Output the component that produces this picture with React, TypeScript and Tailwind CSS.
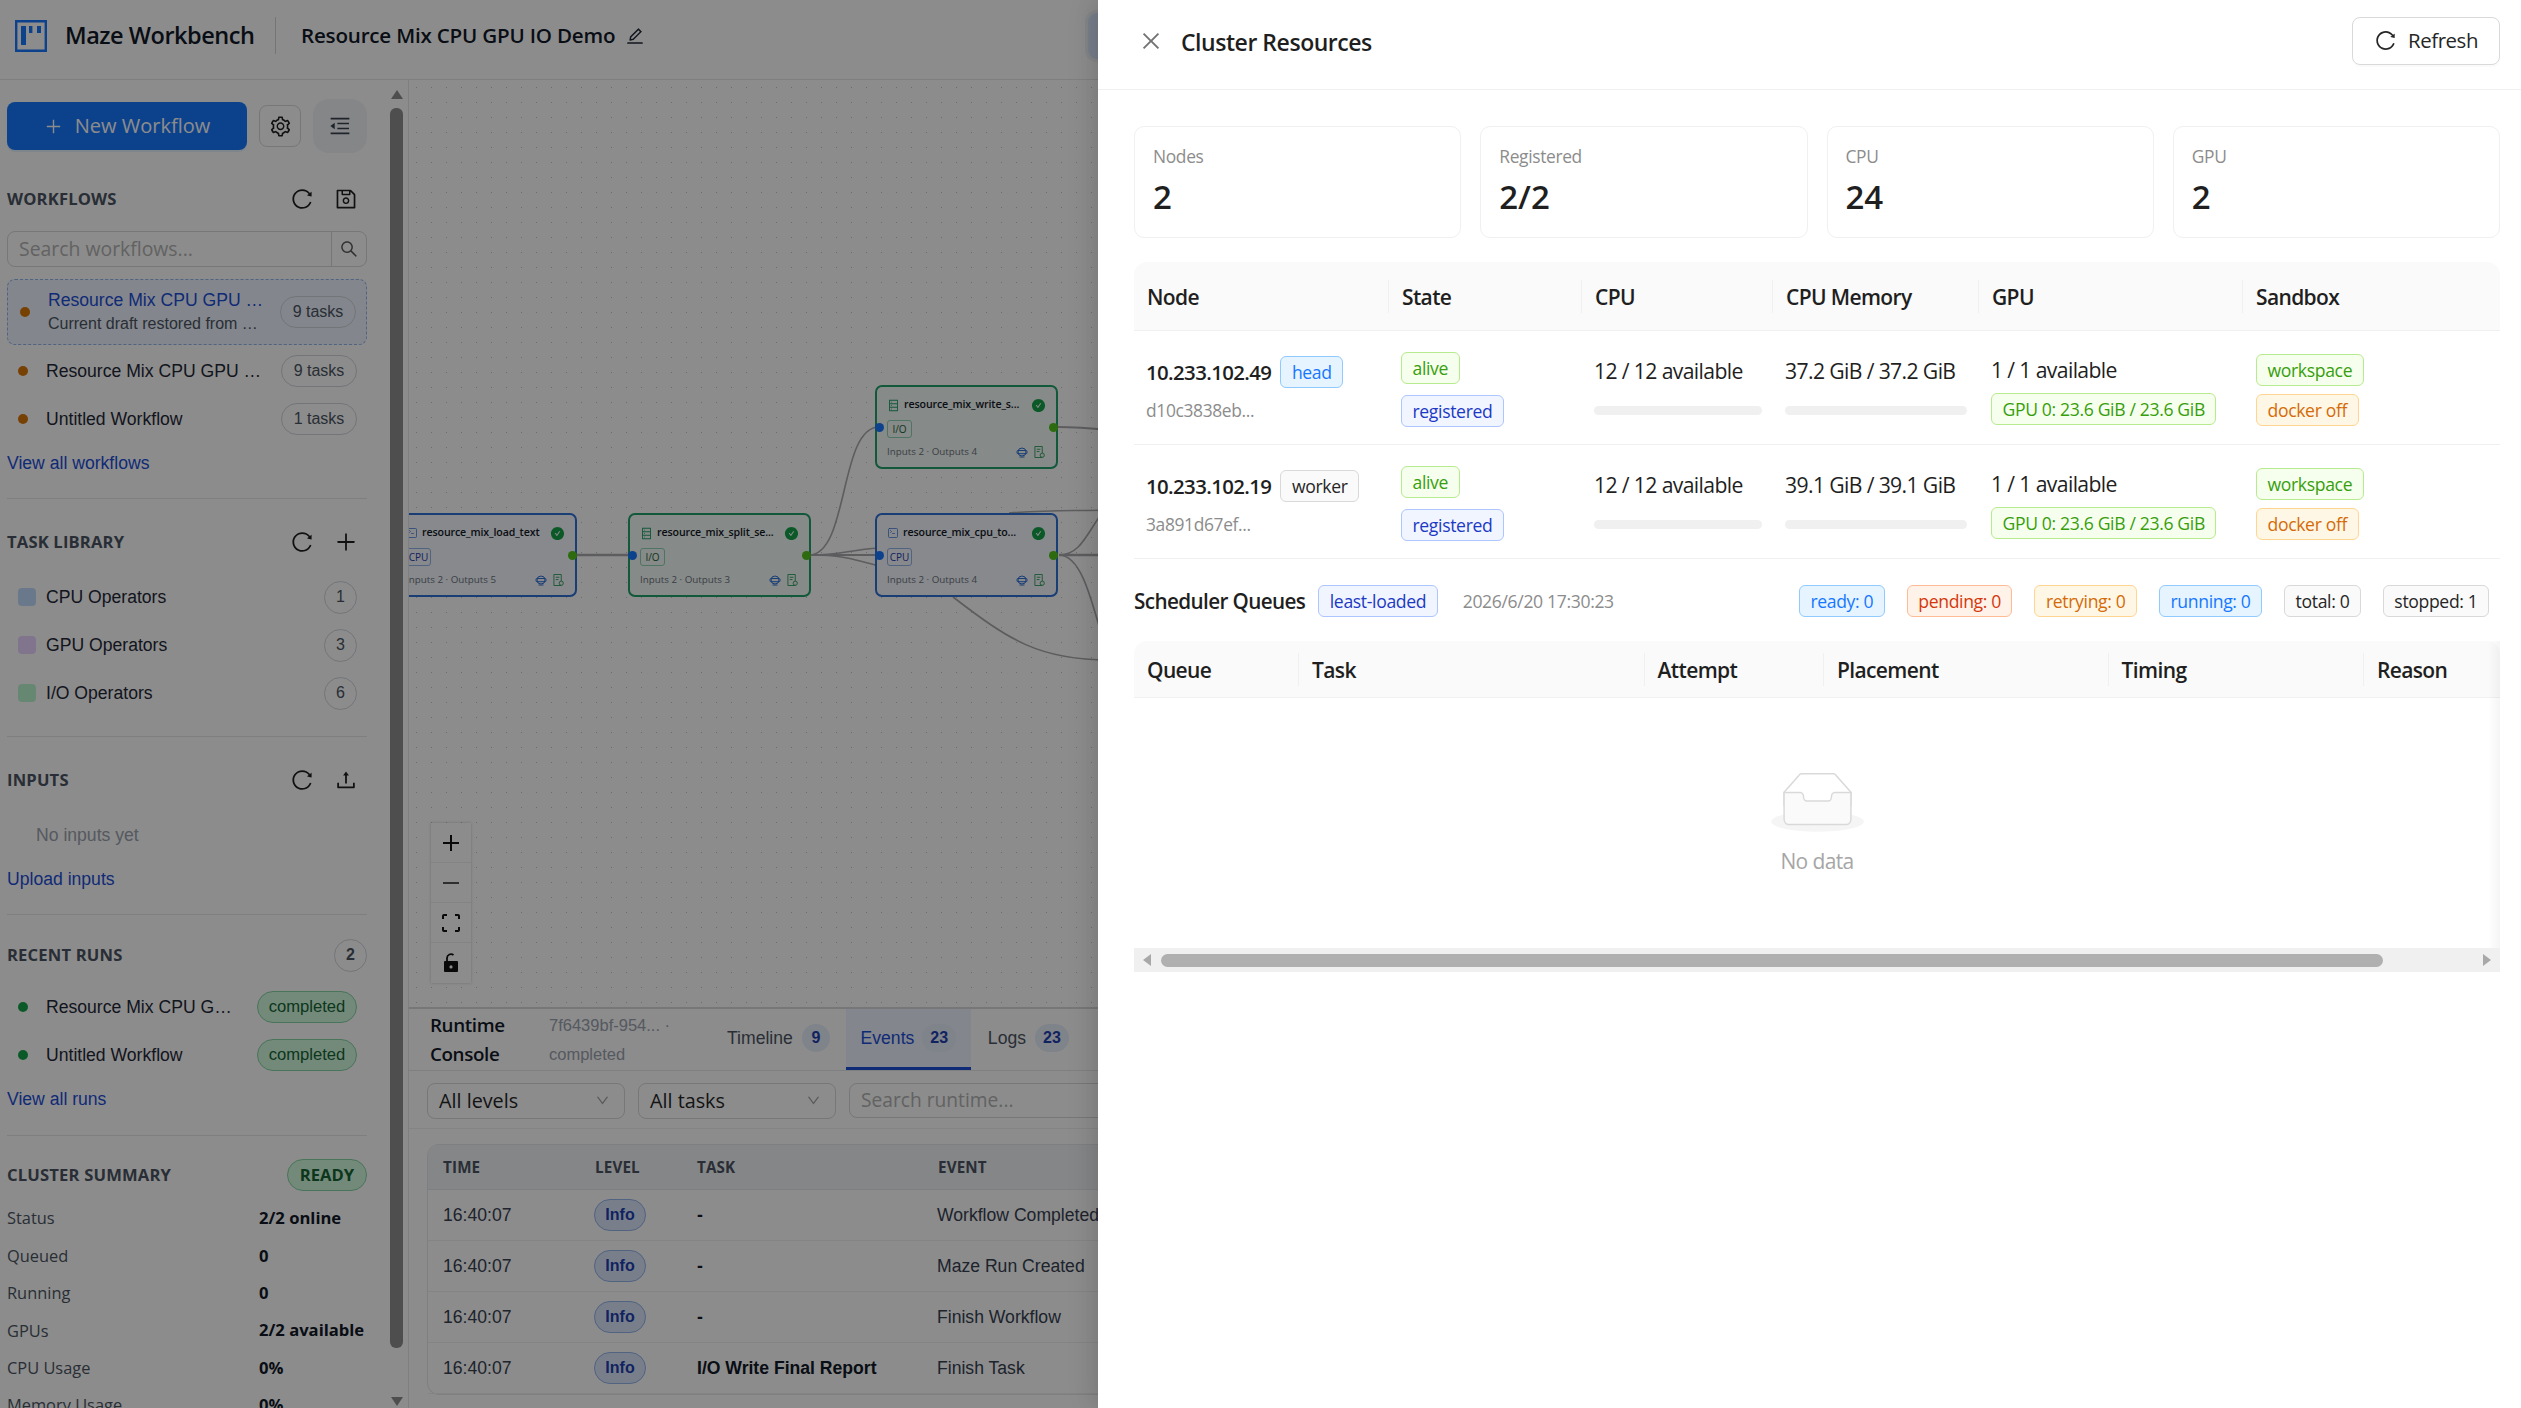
import React from 'react';
import {
  AiOutlineClose,
  AiOutlineDatabase,
  AiOutlineDown,
  AiOutlineEdit,
  AiOutlineMenuFold,
  AiOutlinePlus,
  AiOutlineReload,
  AiOutlineSave,
  AiOutlineSearch,
  AiOutlineSetting,
  AiOutlineUpload,
  AiFillCheckCircle,
} from 'react-icons/ai';
import { SquareTerminal } from 'lucide-react';

const ARIAL = "font-['Liberation_Sans',Arial,sans-serif]";

const tones: Record<string, string> = {
  blue: 'text-[#1677ff] bg-[#e6f4ff] border-[#91caff]',
  green: 'text-[#389e0d] bg-[#f6ffed] border-[#b7eb8f]',
  geek: 'text-[#1d39c4] bg-[#f0f5ff] border-[#adc6ff]',
  orange: 'text-[#d46b08] bg-[#fff7e6] border-[#ffd591]',
  volcano: 'text-[#d4380d] bg-[#fff2e8] border-[#ffbb96]',
  plain: 'text-[#262626] bg-[#fafafa] border-[#d9d9d9]',
};

const Tag = ({ tone, children }: { tone: string; children: React.ReactNode }) => (
  <span className={`inline-flex h-[32px] items-center rounded-[6px] border px-[10.5px] text-[17.6px] tracking-[-0.02em] whitespace-nowrap ${tones[tone]}`}>
    {children}
  </span>
);

const SectionHeader = ({ title, children }: { title: string; children?: React.ReactNode }) => (
  <div className="flex h-[32px] items-center justify-between">
    <span className="text-[16.6px] font-bold tracking-[0.01em] text-[#4b5563] uppercase">{title}</span>
    {children}
  </div>
);

const HeaderActions = ({ second }: { second: React.ReactNode }) => (
  <div className="mr-[9px] flex items-center gap-[20.5px] text-[24px] text-[#1f1f1f]">
    <AiOutlineReload />
    {second}
  </div>
);

const Pill = ({ children }: { children: React.ReactNode }) => (
  <span className={`${ARIAL} flex h-[32px] w-[76px] shrink-0 items-center justify-center rounded-full border border-[#d1d5db] text-[16px] text-[#4b5563]`}>
    {children}
  </span>
);

const Count = ({ n, bold }: { n: number; bold?: boolean }) => (
  <span className={`${ARIAL} flex h-[33px] w-[33px] items-center justify-center rounded-full border border-[#d1d5db] text-[16px] ${bold ? 'font-bold' : ''} text-[#4b5563]`}>
    {n}
  </span>
);

const Done = () => (
  <span className={`${ARIAL} flex h-[32px] w-[100px] shrink-0 items-center justify-center rounded-full border border-[#86d5a5] bg-[#d1fadf] text-[16.6px] text-[#166534]`}>
    completed
  </span>
);

const Row = ({ dot, name, right }: { dot: string; name: string; right: React.ReactNode }) => (
  <div className="flex h-[48px] items-center pr-[10px]">
    <span className={`ml-[11px] h-[10px] w-[10px] shrink-0 rounded-full ${dot}`} />
    <span className={`${ARIAL} ml-[18px] flex-1 whitespace-nowrap text-[17.6px] text-[#1f2937]`}>{name}</span>
    {right}
  </div>
);

const Operator = ({ color, name, n }: { color: string; name: string; n: number }) => (
  <div className="flex h-[48px] items-center pr-[10px]">
    <span className={`ml-[11px] h-[18px] w-[18px] rounded-[4px] ${color}`} />
    <span className={`${ARIAL} ml-[10px] flex-1 text-[17.6px] text-[#1f2937]`}>{name}</span>
    <Count n={n} />
  </div>
);

const Stat = ({ label, value }: { label: string; value: string }) => (
  <div className="flex h-[37.4px] items-center">
    <span className="w-[252px] text-[16.4px] text-[#4b5563]">{label}</span>
    <span className="text-[16.6px] font-bold text-[#111827]">{value}</span>
  </div>
);

const Divider = ({ className }: { className: string }) => <div className={`h-px bg-[#e5e7eb] ${className}`} />;

const LinkText = ({ children, className }: { children: React.ReactNode; className: string }) => (
  <div className={`${ARIAL} flex h-[24px] items-center text-[17.6px] text-[#1d4ed8] ${className}`}>{children}</div>
);

const Sidebar = () => (
  <aside className="flex w-[390px] shrink-0 flex-col overflow-hidden pr-[23px] pl-[7px] [&>*]:shrink-0">
    <div className="mt-[19px] flex h-[54px] items-center">
      <button className="flex h-[48px] w-[240px] items-center justify-center gap-[12px] rounded-[8px] bg-[#1677ff] text-[20px] text-white shadow-[0_2px_0_rgba(5,145,255,0.1)]">
        <AiOutlinePlus className="text-[19px]" />
        New Workflow
      </button>
      <span className="ml-[12px] flex h-[42px] w-[42px] items-center justify-center rounded-[8px] border border-[#d9d9d9] text-[23px] text-[#1f1f1f]">
        <AiOutlineSetting />
      </span>
      <span className="ml-[12px] flex h-[54px] w-[54px] items-center justify-center rounded-[16px] bg-[#f3f4f6] text-[24px] text-[#374151]">
        <AiOutlineMenuFold />
      </span>
    </div>

    <div className="mt-[30px]">
      <SectionHeader title="Workflows">
        <HeaderActions second={<AiOutlineSave />} />
      </SectionHeader>
    </div>
    <div className="mt-[16px] flex h-[36px] rounded-[8px] border border-[#d9d9d9]">
      <span className="flex-1 pl-[11px] text-[19.4px] leading-[34px] text-[#b3b3b3]">Search workflows...</span>
      <span className="flex w-[35px] items-center justify-center border-l border-[#d9d9d9] text-[20px] text-[#595959]">
        <AiOutlineSearch />
      </span>
    </div>
    <div className="mt-[12px] flex h-[66px] items-center rounded-[8px] border border-dashed border-[#93b4ea] bg-[#eff4ff] pr-[10px]">
      <span className="ml-[12px] h-[10px] w-[10px] shrink-0 rounded-full bg-[#d97706]" />
      <div className={`${ARIAL} ml-[18px] min-w-0 flex-1 whitespace-nowrap`}>
        <div className="text-[17.6px] leading-[23px] text-[#1d4ed8]">Resource Mix CPU GPU …</div>
        <div className="text-[16px] leading-[23px] text-[#4b5563]">Current draft restored from …</div>
      </div>
      <Pill>9 tasks</Pill>
    </div>
    <div className="mt-[2px]">
      <Row dot="bg-[#d97706]" name="Resource Mix CPU GPU …" right={<Pill>9 tasks</Pill>} />
      <Row dot="bg-[#d97706]" name="Untitled Workflow" right={<Pill>1 tasks</Pill>} />
    </div>
    <LinkText className="mt-[8px]">View all workflows</LinkText>
    <Divider className="mt-[23px]" />

    <div className="mt-[27px]">
      <SectionHeader title="Task Library">
        <HeaderActions second={<AiOutlinePlus />} />
      </SectionHeader>
    </div>
    <div className="mt-[15px]">
      <Operator color="bg-[#bfdbfe]" name="CPU Operators" n={1} />
      <Operator color="bg-[#e9d5ff]" name="GPU Operators" n={3} />
      <Operator color="bg-[#bbf7d0]" name="I/O Operators" n={6} />
    </div>
    <Divider className="mt-[19px]" />

    <div className="mt-[27px]">
      <SectionHeader title="Inputs">
        <HeaderActions second={<AiOutlineUpload />} />
      </SectionHeader>
    </div>
    <div className={`${ARIAL} mt-[27px] h-[24px] pl-[29px] text-[17.6px] leading-[24px] text-[#9ca3af]`}>No inputs yet</div>
    <LinkText className="mt-[20px]">Upload inputs</LinkText>
    <Divider className="mt-[23px]" />

    <div className="mt-[24px]">
      <SectionHeader title="Recent Runs">
        <Count n={2} bold />
      </SectionHeader>
    </div>
    <div className="mt-[12px]">
      <Row dot="bg-[#16a34a]" name="Resource Mix CPU G…" right={<Done />} />
      <Row dot="bg-[#16a34a]" name="Untitled Workflow" right={<Done />} />
    </div>
    <LinkText className="mt-[8px]">View all runs</LinkText>
    <Divider className="mt-[24px]" />

    <div className="mt-[23px] flex h-[32px] items-center justify-between">
      <span className="text-[16.6px] font-bold tracking-[0.01em] text-[#4b5563]">CLUSTER SUMMARY</span>
      <span className="flex h-[32px] w-[80px] items-center justify-center rounded-full border border-[#86d5a5] bg-[#d1fadf] text-[16.6px] font-bold text-[#166534]">READY</span>
    </div>
    <div className="mt-[9px]">
      <Stat label="Status" value="2/2 online" />
      <Stat label="Queued" value="0" />
      <Stat label="Running" value="0" />
      <Stat label="GPUs" value="2/2 available" />
      <Stat label="CPU Usage" value="0%" />
      <Stat label="Memory Usage" value="0%" />
    </div>
  </aside>
);

const ScrollRail = () => (
  <div className="flex w-[18px] shrink-0 flex-col items-start">
    <span className="mt-[10px] ml-[1px] h-0 w-0 border-x-[6px] border-b-[9px] border-x-transparent border-b-[#8f8f8f]" />
    <span className="mt-[9px] h-[1240px] w-[13px] shrink-0 rounded-[6px] bg-[#8f8f8f]" />
    <span className="mt-[49px] ml-[1px] h-0 w-0 border-x-[6px] border-t-[9px] border-x-transparent border-t-[#8f8f8f]" />
  </div>
);

const ServiceIcon = () => (
  <svg viewBox="0 0 12 12" className="h-[12px] w-[12px] text-[#2f6fd6]" fill="none" stroke="currentColor" strokeWidth="1">
    <circle cx="6" cy="6" r="4" />
    <rect x="1" y="4.5" width="10" height="3.2" rx="1" />
    <path d="M3.5 11h5" />
  </svg>
);

const DocIcon = () => (
  <svg viewBox="0 0 12 14" className="h-[14px] w-[11px] text-[#2f9e5f]" fill="none" stroke="currentColor" strokeWidth="1">
    <path d="M1 1h8v12H1z" />
    <path d="M3 4h4M3 6.5h3" />
    <circle cx="9" cy="10.5" r="2.3" fill="#eef4f0" />
  </svg>
);

type NodeProps = { left: number; top: number; title: string; kind: 'CPU' | 'I/O'; outputs: number };

const FlowNode = ({ left, top, title, kind, outputs }: NodeProps) => {
  const cpu = kind === 'CPU';
  return (
    <div
      className={`absolute h-[84px] w-[183px] rounded-[7px] border-2 px-[10px] ${cpu ? 'border-[#2f6fd6] bg-[#f6f9ff]' : 'border-[#22a06b] bg-[#f5fbf8]'}`}
      style={{ left, top }}
    >
      <div className="mt-[8px] flex h-[20px] items-center">
        {cpu ? (
          <SquareTerminal size={12} strokeWidth={1.4} className="shrink-0 text-[#2f6fd6]" />
        ) : (
          <AiOutlineDatabase className="shrink-0 text-[13px] text-[#22a06b]" />
        )}
        <span className="ml-[4px] flex-1 whitespace-nowrap text-[10.6px] font-semibold tracking-[-0.01em] text-[#111827]">{title}</span>
        <AiFillCheckCircle className="ml-[4px] shrink-0 text-[15px] text-[#16a34a]" />
      </div>
      <span className={`mt-[5px] flex h-[18px] w-[25px] items-center justify-center rounded-[3px] border text-[10px] ${cpu ? 'border-[#93b4ea] text-[#1e40af]' : 'border-[#8fd3b4] text-[#166534]'}`}>
        {kind}
      </span>
      <div className="mt-[7px] flex h-[14px] items-center justify-between">
        <span className="text-[9.8px] text-[#6b7280]">Inputs 2 · Outputs {outputs}</span>
        <span className="mr-[1px] flex items-center gap-[6px]">
          <ServiceIcon />
          <DocIcon />
        </span>
      </div>
      <span className="absolute top-[36px] left-[-2px] h-[9px] w-[9px] rounded-full bg-[#1677ff]" />
      <span className="absolute top-[36px] right-[-2px] h-[9px] w-[9px] rounded-full bg-[#52c41a]" />
    </div>
  );
};

const ControlButton = ({ children, last }: { children: React.ReactNode; last?: boolean }) => (
  <div className={`flex h-[40px] w-[40px] items-center justify-center text-[#111] ${last ? '' : 'border-b border-[#eeeeee]'}`}>{children}</div>
);

const Canvas = () => (
  <div className="relative flex-1 overflow-hidden bg-white bg-[radial-gradient(#c4c4c4_0.8px,transparent_0.9px)] bg-[size:15px_15px]">
    <svg className="absolute top-0 left-0 h-full w-[720px]" fill="none" stroke="#a9a9ae" strokeWidth="1.6">
      <path d="M168 475H222" strokeWidth="2.4" />
      <path d="M400 475C440 475 430 347 470 347" />
      <path d="M400 475H470" strokeWidth="2" />
      <path d="M402 475C430 475 440 478 470 486" />
      <path d="M402 475C430 475 440 470 470 468" />
      <path d="M648 347C665 347 680 348 700 350" strokeWidth="2" />
      <path d="M600 433C640 430 660 431 700 430" />
      <path d="M650 475H700" strokeWidth="2.4" />
      <path d="M650 475C675 475 680 445 700 425" />
      <path d="M650 475C670 475 680 510 692 553" />
      <path d="M544 517C600 560 630 580 700 580" />
    </svg>
    <FlowNode left={-15} top={433} title="resource_mix_load_text" kind="CPU" outputs={5} />
    <FlowNode left={219} top={433} title="resource_mix_split_se..." kind="I/O" outputs={3} />
    <FlowNode left={466} top={305} title="resource_mix_write_s..." kind="I/O" outputs={4} />
    <FlowNode left={466} top={433} title="resource_mix_cpu_to..." kind="CPU" outputs={4} />

    <div className="absolute bottom-[24px] left-[22px] bg-white shadow-[0_0_3px_rgba(0,0,0,0.2)]">
      <ControlButton><svg viewBox="0 0 20 20" className="h-[20px] w-[20px]" stroke="currentColor" strokeWidth="2"><path d="M10 2v16M2 10h16" /></svg></ControlButton>
      <ControlButton><svg viewBox="0 0 20 20" className="h-[20px] w-[20px]" stroke="#555" strokeWidth="2"><path d="M2 10h16" /></svg></ControlButton>
      <ControlButton><svg viewBox="0 0 20 20" className="h-[20px] w-[20px]" fill="none" stroke="currentColor" strokeWidth="2"><path d="M2 6V3a1 1 0 0 1 1-1h3M14 2h3a1 1 0 0 1 1 1v3M18 14v3a1 1 0 0 1-1 1h-3M6 18H3a1 1 0 0 1-1-1v-3" /></svg></ControlButton>
      <ControlButton last><svg viewBox="0 0 20 20" className="h-[20px] w-[20px]" fill="currentColor"><path d="M4 8h12a1 1 0 0 1 1 1v9a1 1 0 0 1-1 1H4a1 1 0 0 1-1-1V9a1 1 0 0 1 1-1zm6 4.3a1.6 1.6 0 1 0 0 3.2 1.6 1.6 0 0 0 0-3.2z" fillRule="evenodd" /><path d="M6 8V5a4 4 0 0 1 6.5-3" fill="none" stroke="currentColor" strokeWidth="1.8" /></svg></ControlButton>
    </div>
  </div>
);

const Badge = ({ children }: { children: React.ReactNode }) => (
  <span className={`${ARIAL} flex h-[28px] min-w-[28px] items-center justify-center rounded-full bg-[#e8eefc] px-[8px] text-[16px] font-bold text-[#1e40af]`}>
    {children}
  </span>
);

const Select = ({ label }: { label: string }) => (
  <div className="flex h-[36px] w-[198px] shrink-0 items-center justify-between rounded-[8px] border border-[#d9d9d9] pr-[14px] pl-[11px] text-[19.8px] text-[#262626]">
    {label}
    <AiOutlineDown className="text-[15px] text-[#a3a3a3]" />
  </div>
);

const logRows = [
  { task: '-', event: 'Workflow Completed' },
  { task: '-', event: 'Maze Run Created' },
  { task: '-', event: 'Finish Workflow' },
  { task: 'I/O Write Final Report', event: 'Finish Task' },
];

const Console = () => (
  <section className="flex h-[401px] shrink-0 flex-col border-t-2 border-[#d9d9de] bg-white">
    <div className="flex h-[62px] shrink-0 items-stretch border-b border-[#e5e7eb]">
      <div className="ml-[21px] flex w-[119px] flex-col justify-center text-[18.8px] leading-[29px] font-semibold tracking-[-0.02em] text-[#111827]">
        <span>Runtime</span>
        <span>Console</span>
      </div>
      <div className={`${ARIAL} flex w-[178px] flex-col justify-center text-[16.5px] leading-[29px] text-[#9ca3af]`}>
        <span>7f6439bf-954... ·</span>
        <span>completed</span>
      </div>
      <div className={`${ARIAL} flex items-center gap-[9px] pb-[3px] text-[17.6px] text-[#4b5563]`}>
        Timeline <Badge>9</Badge>
      </div>
      <div className={`${ARIAL} ml-[16px] flex w-[125px] items-center justify-center gap-[8px] border-b-[3px] border-[#1d4ed8] bg-[#eff4ff] text-[17.6px] text-[#1d4ed8]`}>
        Events <Badge>23</Badge>
      </div>
      <div className={`${ARIAL} ml-[17px] flex items-center gap-[9px] pb-[3px] text-[17.6px] text-[#4b5563]`}>
        Logs <Badge>23</Badge>
      </div>
    </div>
    <div className="flex h-[58px] shrink-0 items-center gap-[13px] border-b border-[#f0f0f0] pt-[2px] pl-[18px]">
      <Select label="All levels" />
      <Select label="All tasks" />
      <div className="flex h-[35px] w-[400px] shrink-0 items-center rounded-[8px] border border-[#d9d9d9] pl-[11px] text-[19.2px] text-[#b3b3b3]">
        Search runtime...
      </div>
    </div>
    <div className="mt-[15px] ml-[18px] w-[1000px] rounded-[12px] border border-[#e5e7eb]">
      <div className="grid h-[45px] grid-cols-[151px_102px_241px_1fr] items-center rounded-t-[12px] border-b border-[#e5e7eb] bg-[#f3f4f6] text-[15.2px] font-bold tracking-[0.01em] text-[#4b5563]">
        <span className="pl-[15px]">TIME</span>
        <span className="pl-[16px]">LEVEL</span>
        <span className="pl-[16px]">TASK</span>
        <span className="pl-[16px]">EVENT</span>
      </div>
      {logRows.map((r, i) => (
        <div key={i} className={`${ARIAL} grid h-[51px] grid-cols-[151px_102px_241px_1fr] items-center border-b border-[#f0f0f0] text-[17.6px]`}>
          <span className="pl-[15px] text-[#374151]">16:40:07</span>
          <span className="pl-[15px]">
            <span className="flex h-[32px] w-[52px] items-center justify-center rounded-full border border-[#93b4ea] bg-[#dbe7fe] text-[16px] font-bold text-[#1e40af]">Info</span>
          </span>
          <span className="pl-[16px] font-bold text-[#111827]">{r.task}</span>
          <span className="pl-[15px] text-[#374151]">{r.event}</span>
        </div>
      ))}
    </div>
  </section>
);

const Metric = ({ label, value }: { label: string; value: string }) => (
  <div className="h-[112px] rounded-[10px] border border-[#f0f0f0] px-[18px] pt-[16px]">
    <div className="text-[17.4px] leading-[26px] tracking-[-0.02em] text-[#8c8c8c]">{label}</div>
    <div className="mt-[6px] text-[33px] leading-[44px] font-semibold text-[#1f1f1f]">{value}</div>
  </div>
);

const TableHead = ({ cols, names, tall }: { cols: string; names: string[]; tall?: boolean }) => (
  <div className={`grid ${cols} items-center rounded-t-[13px] border-b border-[#f0f0f0] bg-[#fafafa] ${tall ? 'h-[69px]' : 'h-[57px]'}`}>
    {names.map((n, i) => (
      <div key={n} className={`flex h-[33px] items-center pt-[3px] pl-[13px] text-[21px] font-semibold tracking-[-0.03em] text-[#1f1f1f] ${i > 0 ? 'border-l border-[#f0f0f0]' : ''}`}>
        {n}
      </div>
    ))}
  </div>
);

const Usage = ({ text, bar }: { text: string; bar: string }) => (
  <div className="pt-[25px] pl-[13px]">
    <div className="h-[30px] text-[21.2px] leading-[30px] tracking-[-0.03em] whitespace-nowrap text-[#1f1f1f]">{text}</div>
    <div className={`mt-[20px] h-[9px] rounded-full bg-[#f0f0f0] ${bar}`} />
  </div>
);

const NODE_COLS = 'grid-cols-[254px_193px_191px_206px_264px_258px]';
const QUEUE_COLS = 'grid-cols-[164px_345.6px_179.4px_284.6px_255.4px_137px]';

const nodes = [
  { ip: '10.233.102.49', role: 'head', tone: 'blue', id: 'd10c3838eb...', mem: '37.2 GiB / 37.2 GiB' },
  { ip: '10.233.102.19', role: 'worker', tone: 'plain', id: '3a891d67ef...', mem: '39.1 GiB / 39.1 GiB' },
];

const ClusterDrawer = () => (
  <div className="absolute top-0 right-0 bottom-0 flex w-[1423px] flex-col bg-white shadow-[-6px_0_16px_rgba(0,0,0,0.08),-9px_0_28px_rgba(0,0,0,0.05)]">
    <div className="flex h-[90px] shrink-0 items-center border-b border-[#f0f0f0] pr-[21px] pb-[8px] pl-[41px]">
      <AiOutlineClose className="text-[24px] text-[#737373]" />
      <span className="ml-[18px] flex-1 pt-[4px] text-[23px] font-semibold tracking-[-0.02em] text-[#1f1f1f]">Cluster Resources</span>
      <button className="flex h-[48px] w-[148px] items-center justify-center gap-[11px] rounded-[8px] border border-[#d9d9d9] text-[20.4px] tracking-[-0.02em] text-[#262626] shadow-[0_2px_0_rgba(0,0,0,0.02)]">
        <AiOutlineReload className="text-[23px]" />
        Refresh
      </button>
    </div>

    <div className="flex-1 pr-[21px] pl-[36px]">
      <div className="mt-[36px] grid grid-cols-4 gap-[19px]">
        <Metric label="Nodes" value="2" />
        <Metric label="Registered" value="2/2" />
        <Metric label="CPU" value="24" />
        <Metric label="GPU" value="2" />
      </div>

      <div className="mt-[24px]">
        <TableHead cols={NODE_COLS} names={['Node', 'State', 'CPU', 'CPU Memory', 'GPU', 'Sandbox']} tall />
        {nodes.map((n) => (
          <div key={n.ip} className={`grid h-[114px] ${NODE_COLS} border-b border-[#f0f0f0]`}>
            <div className="pt-[25px] pl-[12px]">
              <div className="flex h-[32px] items-center gap-[9px]">
                <span className="text-[20.4px] font-semibold tracking-[-0.03em] text-[#1f1f1f]">{n.ip}</span>
                <Tag tone={n.tone}>{n.role}</Tag>
              </div>
              <div className="mt-[9px] text-[17.4px] tracking-[-0.02em] text-[#8c8c8c]">{n.id}</div>
            </div>
            <div className="flex flex-col items-start gap-[11px] pt-[21px] pl-[13px]">
              <Tag tone="green">alive</Tag>
              <Tag tone="geek">registered</Tag>
            </div>
            <Usage text="12 / 12 available" bar="w-[168px]" />
            <Usage text={n.mem} bar="w-[182px]" />
            <div className="pt-[24px] pl-[13px]">
              <div className="h-[30px] text-[21.2px] leading-[30px] tracking-[-0.03em] text-[#1f1f1f]">1 / 1 available</div>
              <div className="mt-[8px]"><Tag tone="green">GPU 0: 23.6 GiB / 23.6 GiB</Tag></div>
            </div>
            <div className="flex flex-col items-start gap-[8px] pt-[23px] pl-[14px]">
              <Tag tone="green">workspace</Tag>
              <Tag tone="orange">docker off</Tag>
            </div>
          </div>
        ))}
      </div>

      <div className="mt-[26px] flex h-[32px] items-center">
        <span className="pt-[2px] text-[20.7px] font-semibold tracking-[-0.03em] text-[#1f1f1f]">Scheduler Queues</span>
        <span className="ml-[13px]"><Tag tone="geek">least-loaded</Tag></span>
        <span className="ml-[25px] flex-1 text-[17.6px] tracking-[-0.02em] text-[#8c8c8c]">2026/6/20 17:30:23</span>
        <div className="mr-[11px] flex gap-[22px]">
          <Tag tone="blue">ready: 0</Tag>
          <Tag tone="volcano">pending: 0</Tag>
          <Tag tone="orange">retrying: 0</Tag>
          <Tag tone="blue">running: 0</Tag>
          <Tag tone="plain">total: 0</Tag>
          <Tag tone="plain">stopped: 1</Tag>
        </div>
      </div>

      <div className="relative mt-[24px]">
        <TableHead cols={QUEUE_COLS} names={['Queue', 'Task', 'Attempt', 'Placement', 'Timing', 'Reason']} />
        <div className="flex h-[250px] flex-col items-center pt-[74px]">
          <svg viewBox="0 0 64 41" className="h-[60px] w-[93px]">
            <g transform="translate(0 1)" fill="none" fillRule="evenodd">
              <ellipse fill="#f5f5f5" cx="32" cy="33" rx="32" ry="7" />
              <g fillRule="nonzero" stroke="#d9d9d9">
                <path d="M55 12.76L44.854 1.258C44.367.474 43.656 0 42.907 0H21.093c-.749 0-1.46.474-1.947 1.257L9 12.761V22h46v-9.24z" />
                <path d="M41.613 15.931c0-1.605.994-2.93 2.227-2.931H55v18.137C55 33.26 53.68 35 52.05 35h-40.1C10.32 35 9 33.259 9 31.137V13h11.16c1.233 0 2.227 1.323 2.227 2.928v.022c0 1.605 1.005 2.901 2.237 2.901h14.752c1.232 0 2.237-1.308 2.237-2.913v-.007z" fill="#fafafa" />
              </g>
            </g>
          </svg>
          <span className="mt-[14px] text-[21px] tracking-[-0.03em] text-[#a6a6a6]">No data</span>
        </div>
        <div className="flex h-[24px] items-center bg-[#f0f0f0] pr-[9px] pl-[9px]">
          <span className="h-0 w-0 border-y-[6px] border-r-[8px] border-y-transparent border-r-[#a8a8a8]" />
          <span className="mx-[10px] h-[13px] flex-1 rounded-full bg-[#b0b0b0]" />
          <span className="ml-[90px] h-0 w-0 border-y-[6px] border-l-[8px] border-y-transparent border-l-[#a8a8a8]" />
        </div>
        <div className="pointer-events-none absolute top-0 right-0 bottom-[24px] w-[12px] bg-gradient-to-r from-transparent to-black/[0.04]" />
      </div>
    </div>
  </div>
);

const App: React.FC = () => {
  return (
    <div className="relative flex h-screen w-screen flex-col overflow-hidden bg-white font-['Open_Sans','Noto_Sans',sans-serif]">
      <header className="flex h-[80px] shrink-0 items-center border-b border-[#e5e7eb] pb-[8px]">
        <svg viewBox="0 0 32 32" className="ml-[15px] h-[32px] w-[32px] shrink-0 text-[#1677ff]" fill="currentColor">
          <path fillRule="evenodd" d="M0 0h32v32H0zM2.4 2.4v27.2h27.2V2.4z" />
          <rect x="6" y="6" width="5" height="19" />
          <rect x="14" y="6" width="3.4" height="7" />
          <rect x="22" y="6" width="4" height="7" />
        </svg>
        <span className="ml-[18px] w-[210px] shrink-0 text-[23.5px] font-semibold tracking-[-0.02em] text-[#111827]">Maze Workbench</span>
        <span className="h-[37px] w-px shrink-0 bg-[#d1d5db]" />
        <span className="ml-[25px] text-[20.6px] font-semibold tracking-[-0.01em] whitespace-nowrap text-[#111827]">Resource Mix CPU GPU IO Demo</span>
        <AiOutlineEdit className="ml-[10px] shrink-0 text-[20px] text-[#1f2937]" />
        <div className="flex-1" />
        <span className="flex h-[52px] w-[1436px] shrink-0 rounded-[12px] border-[3px] border-[#f3f4f6] bg-[#dbe7fe]" />
      </header>
      <div className="flex min-h-0 flex-1">
        <Sidebar />
        <ScrollRail />
        <div className="flex min-w-0 flex-1 flex-col border-l border-[#e5e7eb]">
          <Canvas />
          <Console />
        </div>
      </div>
      <div className="absolute inset-0 bg-black/45" />
      <ClusterDrawer />
    </div>
  );
};

export default App;
